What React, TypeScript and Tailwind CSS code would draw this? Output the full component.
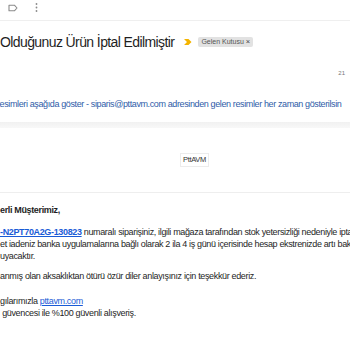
export default function App() {
  return (
    <div className="w-[350px] h-[350px] overflow-hidden bg-white font-['Liberation_Sans',Arial,sans-serif] text-[#222]">
      {/* toolbar */}
      <div className="h-[21px] border-b border-[#efefef] flex items-start pt-[3px] pl-[8px] gap-[17px]">
        <svg width="10" height="8" viewBox="0 0 10 8" className="mt-[1px]">
          <path d="M1 1.2 H6.4 L9 4 L6.4 6.8 H1 Z" fill="none" stroke="#8a8a8a" strokeWidth="1.1" strokeLinejoin="round" />
        </svg>
        <svg width="3" height="9" viewBox="0 0 3 9">
          <circle cx="1.5" cy="1" r="0.9" fill="#8a8a8a" />
          <circle cx="1.5" cy="4.5" r="0.9" fill="#8a8a8a" />
          <circle cx="1.5" cy="8" r="0.9" fill="#8a8a8a" />
        </svg>
      </div>

      {/* subject */}
      <div className="mt-[13px] flex items-center h-[16px]">
        <h1 className="text-[14px] leading-[16px] tracking-[-0.6px] whitespace-nowrap text-[#1f1f1f]">
          Olduğunuz Ürün İptal Edilmiştir
        </h1>
        <svg width="8" height="6" viewBox="0 0 8 6" className="ml-[10px]">
          <path d="M0 0 H4.5 L7.5 3 L4.5 6 H0 L3 3 Z" fill="#f4b400" />
        </svg>
        <span className="ml-[6px] bg-[#e2e2e2] text-[#555] text-[7px] leading-[10px] px-[3px] rounded-[2px] whitespace-nowrap">
          Gelen Kutusu <span className="text-[#444] text-[7.5px]">×</span>
        </span>
      </div>

      {/* date */}
      <div className="mt-[19px] flex justify-end pr-[5px] text-[6px] leading-[8px] text-[#777]">21</div>

      {/* images notice */}
      <div className="mt-[22px] -ml-[3px] text-[9px] leading-[10px] tracking-[-0.38px] text-[#2f5ca8] whitespace-nowrap">
        resimleri aşağıda göster - siparis@pttavm.com adresinden gelen resimler her zaman gösterilsin
      </div>

      <div className="mt-[13px] h-[6px] bg-gradient-to-b from-[#f1f1f1] to-[#f8f8f8]" />

      {/* logo alt */}
      <div className="mt-[25px] pl-[180px]">
        <div className="w-[29px] h-[14px] border border-[#ececec] flex items-center justify-center text-[7.5px] tracking-[-0.3px] text-[#333]">
          PttAVM
        </div>
      </div>

      <div className="mt-[25px] h-px bg-[#eeeeee]" />

      {/* body */}
      <div className="text-[9px] leading-[12px] tracking-[-0.35px] whitespace-nowrap text-[#1e1e1e]">
        <p className="mt-[11px] font-bold">erli Müşterimiz,</p>
        <div className="mt-[10px]">
          <p>
            <a className="text-[#1a5bd6] underline font-bold">-N2PT70A2G-130823</a> numaralı siparişiniz, ilgili mağaza tarafından stok yetersizliği nedeniyle iptal edilmiştir.
          </p>
          <p>et iadeniz banka uygulamalarına bağlı olarak 2 ila 4 iş günü içerisinde hesap ekstrenizde artı bakiye</p>
          <p>uyacaktır.</p>
        </div>
        <p className="mt-[8px]">anmış olan aksaklıktan ötürü özür diler anlayışınız için teşekkür ederiz.</p>
        <div className="mt-[13px]">
          <p>
            gılarımızla <a className="text-[#1a5bd6] underline">pttavm.com</a>
          </p>
          <p>&nbsp;güvencesi ile %100 güvenli alışveriş.</p>
        </div>
      </div>
    </div>
  )
}
